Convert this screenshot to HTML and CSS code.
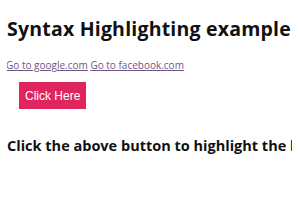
FILE: index.html
```html
<!DOCTYPE html>
<html lang="en">
<head>
    <meta charset="UTF-8">
    <title>Syntax Highlighting example</title>
    <link rel="stylesheet" href="styles.css">
</head>
<body>
    <h1 class="title">Syntax Highlighting example</h1>
    <p class="links">
        <a href="https://www.google.com">Go to google.com</a>
        <a href="https://www.facebook.com">Go to facebook.com</a>
    </p>
    <button class="btn">Click Here</button>
    <h3 class="note">Click the above button to highlight the links</h3>
</body>
</html>
```

FILE: styles.css
```css
body {
    margin: 8px 8px 8px 7px;
    font-family: "Open Sans", sans-serif;
    color: #111;
    background: #fff;
    white-space: nowrap;
    overflow: hidden;
}

.title {
    font-size: 19.5px;
    font-weight: bold;
    letter-spacing: 0.2px;
    line-height: 26px;
    margin: 8px 0 0;
}

.links {
    font-size: 10px;
    line-height: 14px;
    margin: 16px 0 0 -1px;
}

.links a {
    color: #6e5585;
}

.btn {
    display: block;
    height: 27px;
    margin: 10px 0 0 12px;
    padding: 0 6px;
    background-color: #e0255e;
    color: white;
    border: none;
    font-family: "Liberation Sans", Arial, sans-serif;
    font-size: 12px;
}

.note {
    font-size: 14.5px;
    font-weight: bold;
    line-height: 20px;
    margin: 27px 0 0;
}
```
